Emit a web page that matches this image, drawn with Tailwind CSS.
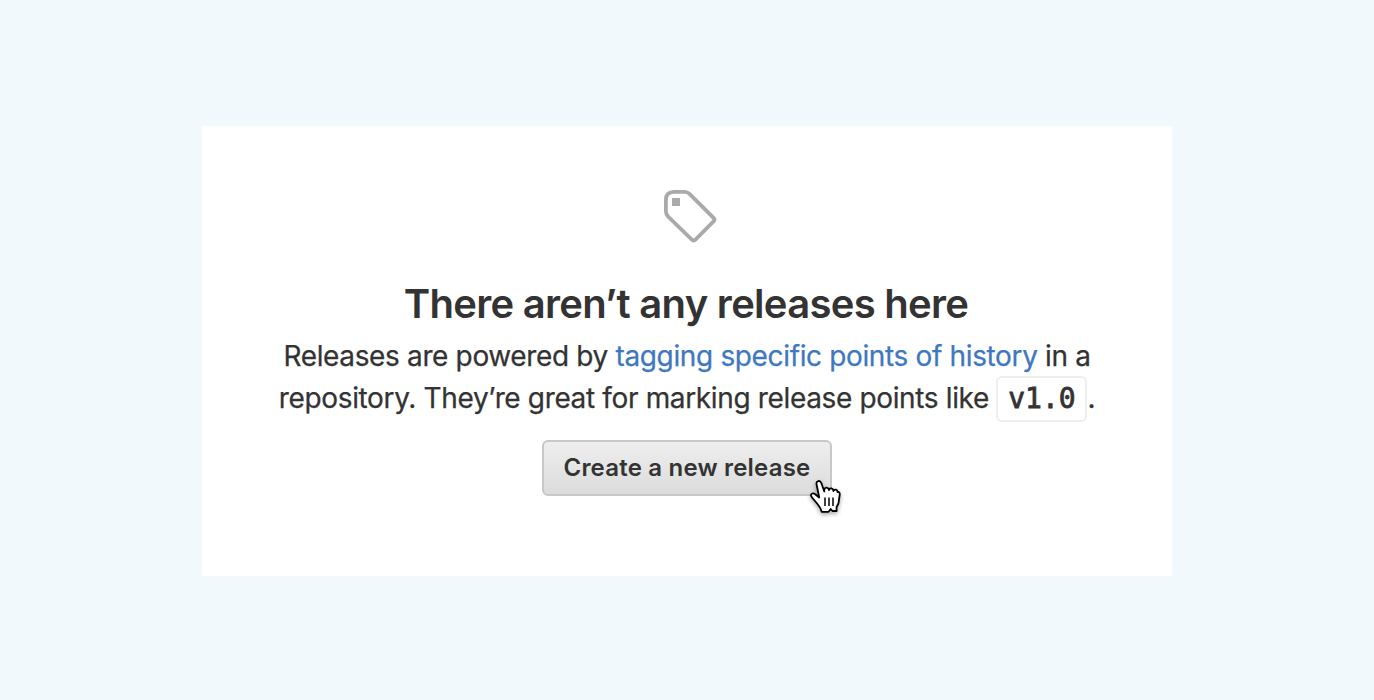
<!DOCTYPE html>
<html lang="en">
<head>
<meta charset="utf-8">
<title>Releases</title>
<script src="https://cdn.jsdelivr.net/npm/@tailwindcss/browser@4"></script>
</head>
<body class="h-[700px] overflow-hidden bg-[#f1f9fd] pt-[126px] font-['Inter',sans-serif] text-[#333]">
<main class="mx-auto flex h-[450px] w-[970px] flex-col items-center bg-white pt-16">
  <svg class="ml-1.5 h-[54px] w-[54px] shrink-0" viewBox="0 0 54 54" fill="none">
    <path d="M11 1.900H21.500Q24.500 1.900 26.500 3.900L51 28.300Q52 29.600 51 30.900L32 50Q30.700 51 29.300 50L4.900 26.300Q2.900 24.300 2.900 21V10Q2.900 1.900 11 1.900Z" stroke="#aaa" stroke-width="3.8"/>
    <path d="M9 8h8v8H9z" fill="#aaa"/>
  </svg>
  <h1 class="mt-[35px] mr-0.5 whitespace-nowrap text-[40px] leading-[50px] font-semibold tracking-[-0.71px]">There aren’t any releases here</h1>
  <p class="mt-[6px] whitespace-nowrap text-center text-[28px] leading-[42px] tracking-[-0.355px] [-webkit-text-stroke:0.25px]">Releases are powered by <a class="text-[#4078c0]">tagging specific points of history</a> in a<br>repository. They’re great for marking release points like <code class="relative -top-px -my-2 inline-flex h-[46px] w-[91px] items-center justify-center rounded-md border-2 border-[#eee] align-middle font-['DejaVu_Sans_Mono',monospace] text-[28px] tracking-normal [-webkit-text-stroke:0.8px]">v1.0</code>.</p>
  <button class="relative mt-[21px] h-14 w-[290px] shrink-0 rounded-md border-2 border-[#c8c8c8] bg-linear-to-b from-[#eee] to-[#dcdcdc] text-[24px] font-semibold tracking-[0.2px] whitespace-nowrap">Create a new release
    <svg class="absolute top-[36px] left-[263px] h-[40px] w-[36px] drop-shadow-[0_2px_2px_rgba(0,0,0,0.35)]" viewBox="807 478 36 40">
      <path d="M816.500 484C816 480.500 820.200 480 821.300 483L824.300 491.500V489.500C825 486.800 828.500 487.200 829 490C829.800 487.500 833 488 833.500 491C834.500 488.800 837.500 489.500 837.500 492C839 491.500 840 493 839.700 495L838.500 503C838 505.500 836.500 506 836.500 508L836.700 511H832.500L830.700 509L828.500 511.800H821.700C821 508 819 506 817.500 504L812 497.500C809.500 494.500 812.500 492 815.500 494.500L819.200 497.500Z" fill="#fff" stroke="#000" stroke-width="1.8" stroke-linejoin="round"/>
      <path d="M825 497.500v8.500M829 497.500v8.500M833 497.500v8.500" stroke="#000" stroke-width="1.5"/>
    </svg>
  </button>
</main>
</body>
</html>
